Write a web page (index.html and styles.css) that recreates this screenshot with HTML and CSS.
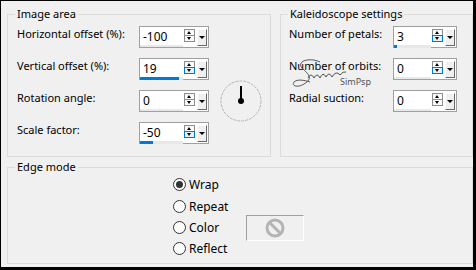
FILE: index.html
```html
<!DOCTYPE html>
<html lang="en">
<head>
    <meta charset="utf-8">
    <title>Kaleidoscope</title>
    <link rel="stylesheet" href="styles.css">
</head>
<body>

<div class="dialog">
    <div class="top">
        <fieldset class="group image-area">
            <legend>Image area</legend>
            <div class="fields">
                <span class="label">Horizontal offset (%):</span>
                <div class="spin">
                    <div class="field"><span class="value">-100</span><span class="track"></span></div>
                    <div class="arrows"><span class="up"></span><span class="down"></span></div>
                    <span class="drop"></span>
                </div>

                <span class="label">Vertical offset (%):</span>
                <div class="spin">
                    <div class="field"><span class="value">19</span><span class="track"><span class="bar" style="width: 90%"></span></span></div>
                    <div class="arrows"><span class="up"></span><span class="down hot"></span></div>
                    <span class="drop"></span>
                </div>

                <span class="label">Rotation angle:</span>
                <div class="spin">
                    <div class="field"><span class="value">0</span><span class="track"></span></div>
                    <div class="arrows"><span class="up"></span><span class="down"></span></div>
                    <span class="drop"></span>
                </div>

                <span class="label">Scale factor:</span>
                <div class="spin">
                    <div class="field"><span class="value">-50</span><span class="track"><span class="bar" style="width: 30%"></span></span></div>
                    <div class="arrows"><span class="up"></span><span class="down hot"></span></div>
                    <span class="drop"></span>
                </div>

                <div class="dial">
                    <svg width="42" height="42" viewBox="0 0 42 42">
                        <circle cx="21" cy="21" r="20" fill="none" stroke="#b4b4b4" stroke-width="1" stroke-dasharray="3 1"></circle>
                        <line x1="21" y1="6" x2="21" y2="21" stroke="#000" stroke-width="2"></line>
                        <circle cx="21" cy="21" r="3" fill="#000"></circle>
                    </svg>
                </div>
            </div>
        </fieldset>

        <fieldset class="group kaleido">
            <legend>Kaleidoscope settings</legend>
            <div class="fields">
                <span class="label">Number of petals:</span>
                <div class="spin">
                    <div class="field"><span class="value">3</span><span class="track"><span class="bar" style="width: 3px"></span></span></div>
                    <div class="arrows"><span class="up"></span><span class="down hot"></span></div>
                    <span class="drop"></span>
                </div>

                <span class="label">Number of orbits:</span>
                <div class="spin">
                    <div class="field"><span class="value">0</span><span class="track"></span></div>
                    <div class="arrows"><span class="up"></span><span class="down hot"></span></div>
                    <span class="drop"></span>
                </div>

                <span class="label">Radial suction:</span>
                <div class="spin">
                    <div class="field"><span class="value">0</span><span class="track"></span></div>
                    <div class="arrows"><span class="up"></span><span class="down"></span></div>
                    <span class="drop"></span>
                </div>
            </div>

            <div class="signature">
                <svg width="60" height="34" viewBox="0 0 60 34">
                    <path d="M30 4 C20 -1 6 3 12 10 C18 16 24 20 14 26 C8 30 1 28 4 24 C7 21 14 22 20 24" fill="none" stroke="#555" stroke-width="1"></path>
                    <path d="M18 20 q3 -6 6 0 q3 -6 6 0 q3 -7 6 -1 q3 -6 6 0 q4 -7 8 -2 q3 -4 6 -3" fill="none" stroke="#555" stroke-width="1"></path>
                </svg>
                <span class="mark">SimPsp</span>
            </div>
        </fieldset>
    </div>

    <fieldset class="group edge">
        <legend>Edge mode</legend>
        <div class="modes">
            <label class="mode first"><span class="radio checked"></span>Wrap</label>
            <label class="mode"><span class="radio"></span>Repeat</label>
            <label class="mode"><span class="radio"></span>Color</label>
            <label class="mode"><span class="radio"></span>Reflect</label>
            <div class="swatch">
                <svg width="20" height="20" viewBox="0 0 20 20">
                    <circle cx="10" cy="10" r="8" fill="none" stroke="#b4b4b4" stroke-width="3"></circle>
                    <line x1="4.5" y1="4.5" x2="15.5" y2="15.5" stroke="#b4b4b4" stroke-width="3"></line>
                </svg>
            </div>
        </div>
    </fieldset>
</div>

</body>
</html>
```

FILE: styles.css
```css
* {
    box-sizing: border-box;
}

body {
    margin: 0;
    background-color: #000;
    font-family: "Noto Sans", "Open Sans", sans-serif;
    font-size: 11px;
    color: #000;
}

.dialog {
    margin: 1px 0 0 1px;
    width: 472px;
    height: 266px;
    padding: 5px 0 0 6px;
    background-color: #f0f0f0;
}

.top {
    display: flex;
    gap: 9px;
}

.group {
    margin: 0;
    min-width: 0;
    padding: 0;
    border: 1px solid #dcdcdc;
}

.group legend {
    margin-left: 7px;
    padding: 0 2px;
    line-height: 16px;
}

.image-area {
    width: 264px;
    padding: 4px 0 12px 0;
}

.kaleido {
    position: relative;
    width: 193px;
    padding: 4px 0 0 0;
}

.fields {
    display: grid;
    grid-template-columns: 122px 70px 42px;
    grid-auto-rows: 22px;
    row-gap: 10px;
    align-items: start;
    padding-left: 9px;
}

.kaleido .fields {
    grid-template-columns: 104px 64px;
    padding-left: 8px;
}

.label {
    grid-column: 1;
    line-height: 16px;
    white-space: nowrap;
}

.spin {
    grid-column: 2;
    display: flex;
    height: 22px;
    border: 1px solid #a0a0a0;
    background-color: #fff;
}

.field {
    flex: 1;
    display: flex;
    flex-direction: column;
    padding-top: 2px;
}

.value {
    padding-left: 3px;
    line-height: 16px;
    font-size: 12px;
}

.track {
    margin-top: auto;
    height: 3px;
    background-color: #e8e8e8;
}

.bar {
    display: block;
    height: 3px;
    background-color: #0078d7;
}

.arrows {
    display: flex;
    flex-direction: column;
    width: 11px;
    margin: 2px 1px 0 1px;
}

.arrows span {
    position: relative;
    height: 7px;
    border: 1px solid #8c8c8c;
    background-color: #fdfdfd;
}

.arrows .down {
    margin-top: -1px;
}

.arrows .down.hot {
    border-color: #0078d7;
    background-color: #e5f1fb;
}

.arrows span::after {
    content: "";
    position: absolute;
    left: 2px;
    top: 1px;
    border-left: 2.5px solid transparent;
    border-right: 2.5px solid transparent;
}

.arrows .up::after {
    border-bottom: 3px solid #000;
}

.arrows .down::after {
    border-top: 3px solid #000;
}

.drop {
    position: relative;
    width: 10px;
    height: 17px;
    margin: 2px 1px 0 1px;
    border-top: 1px solid #fff;
    border-left: 1px solid #fff;
    border-right: 1px solid #696969;
    border-bottom: 1px solid #696969;
    background-color: #f0f0f0;
}

.drop::after {
    content: "";
    position: absolute;
    left: 1px;
    top: 6px;
    border-left: 3px solid transparent;
    border-right: 3px solid transparent;
    border-top: 3px solid #000;
}

.dial {
    grid-column: 3;
    grid-row: 2 / span 3;
    align-self: center;
    margin-left: 11px;
    height: 42px;
}

.signature {
    position: absolute;
    left: 9px;
    top: 36px;
    width: 80px;
    height: 44px;
    pointer-events: none;
}

.signature svg {
    position: absolute;
    left: 0;
    top: 0;
}

.signature .mark {
    position: absolute;
    left: 50px;
    top: 18px;
    font-size: 9px;
    line-height: 11px;
    color: #555;
}

.edge {
    width: 466px;
    height: 105px;
    margin-top: 2px;
}

.modes {
    display: grid;
    grid-template-columns: 73px 58px;
    grid-auto-rows: 21px;
    padding-left: 165px;
}

.mode {
    grid-column: 1;
    display: flex;
    align-items: center;
    gap: 3px;
    white-space: nowrap;
    font-size: 12px;
}

.mode.first {
    margin-bottom: 2px;
}

.radio {
    position: relative;
    width: 13px;
    height: 13px;
    border: 1px solid #333;
    border-radius: 50%;
    background-color: #fff;
}

.radio.checked::after {
    content: "";
    position: absolute;
    left: 2px;
    top: 2px;
    width: 7px;
    height: 7px;
    border-radius: 50%;
    background-color: #333;
}

.swatch {
    grid-column: 2;
    grid-row: 2 / span 3;
    align-self: center;
    display: flex;
    align-items: center;
    justify-content: center;
    height: 26px;
    border-top: 1px solid #a0a0a0;
    border-left: 1px solid #a0a0a0;
    border-right: 1px solid #fff;
    border-bottom: 1px solid #fff;
}
```
